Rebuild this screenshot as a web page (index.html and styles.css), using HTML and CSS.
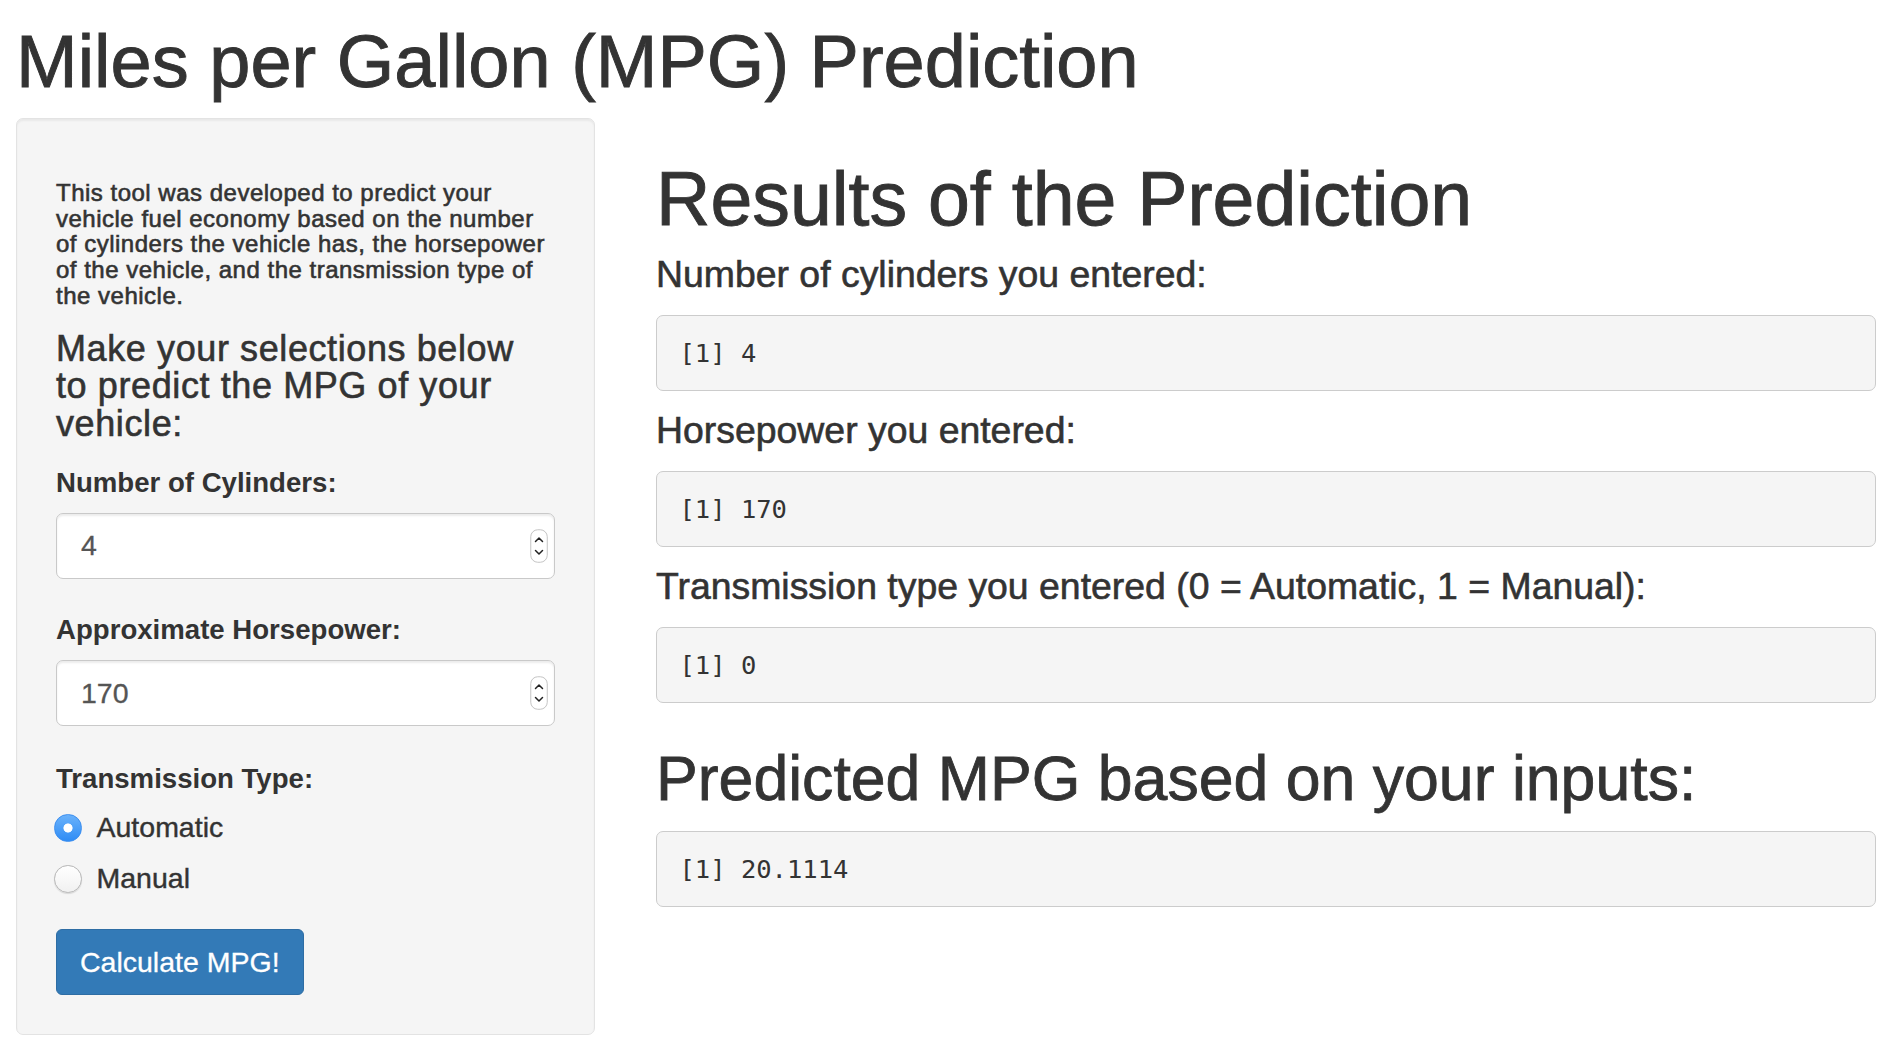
FILE: index.html
```html
<!DOCTYPE html>
<html lang="en">
<head>
<meta charset="utf-8">
<title>Miles per Gallon (MPG) Prediction</title>
<link rel="stylesheet" href="styles.css">
</head>
<body>
<div class="page">
  <h1 class="app-title">Miles per Gallon (MPG) Prediction</h1>
  <div class="layout">
    <aside class="well">
      <h6 class="intro">This tool was developed to predict your<br>vehicle fuel economy based on the number<br>of cylinders the vehicle has, the horsepower<br>of the vehicle, and the transmission type of<br>the vehicle.</h6>
      <h4 class="prompt">Make your selections below<br>to predict the MPG of your<br>vehicle:</h4>

      <div class="form-group">
        <label class="control-label" for="cyl">Number of Cylinders:</label>
        <div class="num-input">
          <input id="cyl" type="number" value="4">
          <svg class="spinner" viewBox="0 0 18 34" aria-hidden="true">
            <rect x="0.75" y="0.75" width="16.5" height="32.5" rx="7" ry="7" fill="#fff" stroke="#c4c4c4" stroke-width="1"/>
            <polyline points="5.5,12.5 9,9 12.5,12.5" fill="none" stroke="#222" stroke-width="1.5" stroke-linecap="round" stroke-linejoin="round"/>
            <polyline points="5.5,21.5 9,25 12.5,21.5" fill="none" stroke="#222" stroke-width="1.5" stroke-linecap="round" stroke-linejoin="round"/>
          </svg>
        </div>
      </div>

      <div class="form-group">
        <label class="control-label" for="hp">Approximate Horsepower:</label>
        <div class="num-input">
          <input id="hp" type="number" value="170">
          <svg class="spinner" viewBox="0 0 18 34" aria-hidden="true">
            <rect x="0.75" y="0.75" width="16.5" height="32.5" rx="7" ry="7" fill="#fff" stroke="#c4c4c4" stroke-width="1"/>
            <polyline points="5.5,12.5 9,9 12.5,12.5" fill="none" stroke="#222" stroke-width="1.5" stroke-linecap="round" stroke-linejoin="round"/>
            <polyline points="5.5,21.5 9,25 12.5,21.5" fill="none" stroke="#222" stroke-width="1.5" stroke-linecap="round" stroke-linejoin="round"/>
          </svg>
        </div>
      </div>

      <div class="form-group radio-group">
        <label class="control-label">Transmission Type:</label>
        <label class="radio"><input type="radio" name="am" value="0" checked><span>Automatic</span></label>
        <label class="radio"><input type="radio" name="am" value="1"><span>Manual</span></label>
      </div>

      <button class="btn-primary" type="button">Calculate MPG!</button>
    </aside>

    <main class="results">
      <h1 class="results-title">Results of the Prediction</h1>
      <h4 class="out-label">Number of cylinders you entered:</h4>
      <pre class="out-box">[1] 4</pre>
      <h4 class="out-label">Horsepower you entered:</h4>
      <pre class="out-box">[1] 170</pre>
      <h4 class="out-label">Transmission type you entered (0 = Automatic, 1 = Manual):</h4>
      <pre class="out-box">[1] 0</pre>
      <h2 class="predicted-title">Predicted MPG based on your inputs:</h2>
      <pre class="out-box">[1] 20.1114</pre>
    </main>
  </div>
</div>
</body>
</html>
```

FILE: styles.css
```css
* {
  box-sizing: border-box;
}

html, body {
  margin: 0;
  padding: 0;
  background: #fff;
}

body {
  font-family: "Liberation Sans", Arial, Helvetica, sans-serif;
  color: #333;
}

.page {
  padding: 21px 24px 0 16px;
}

.app-title {
  margin: 0 0 16px;
  font-size: 74px;
  line-height: 81px;
  font-weight: normal;
  color: #333;
  -webkit-text-stroke: 0.9px #333;
}

.layout {
  display: flex;
  align-items: flex-start;
  gap: 61px;
}

/* ---------- sidebar ---------- */
.well {
  flex: 0 0 579px;
  width: 579px;
  padding: 39px 39px 39px;
  background: #f5f5f5;
  border: 1px solid #e3e3e3;
  border-radius: 7px;
  box-shadow: inset 0 2px 2px rgba(0, 0, 0, 0.05);
}

.intro {
  margin: 21.8px 0 0;
  font-size: 24px;
  letter-spacing: 0.5px;
  line-height: 25.75px;
  font-weight: normal;
  color: #333;
  white-space: nowrap;
  -webkit-text-stroke: 0.6px #333;
}

.prompt {
  margin: 21.2px 0 0;
  font-size: 36px;
  letter-spacing: 0.6px;
  line-height: 37.7px;
  font-weight: normal;
  color: #333;
  white-space: nowrap;
  -webkit-text-stroke: 0.6px #333;
}

.control-label {
  display: block;
  padding-top: 3px;
  font-size: 27.6px;
  line-height: 30px;
  font-weight: bold;
  color: #333;
}

.form-group:nth-of-type(1) {
  margin-top: 22.5px;
}

.form-group:nth-of-type(2) {
  margin-top: 33.5px;
}

.radio-group {
  margin-top: 35px;
}

.num-input {
  position: relative;
  margin-top: 14.6px;
  height: 66px;
}

.num-input input {
  display: block;
  width: 100%;
  height: 66px;
  margin: 0;
  padding: 0 24px;
  font-family: "Liberation Sans", Arial, sans-serif;
  font-size: 28.5px;
  color: #555;
  background: #fff;
  border: 1.5px solid #c9c9c9;
  border-radius: 7px;
  box-shadow: inset 0 2px 2px rgba(0, 0, 0, 0.075);
  outline: none;
  -moz-appearance: textfield;
  appearance: textfield;
  -webkit-text-stroke: 0.3px #555;
}

.num-input input::-webkit-inner-spin-button,
.num-input input::-webkit-outer-spin-button {
  -webkit-appearance: none;
  margin: 0;
}

.spinner {
  position: absolute;
  right: 7px;
  top: 16px;
  width: 18px;
  height: 34px;
}

.radio {
  display: flex;
  align-items: center;
  gap: 15px;
  height: 40px;
  margin-left: -2px;
  font-size: 28.5px;
  color: #333;
  -webkit-text-stroke: 0.4px #333;
}

.radio-group .control-label + .radio {
  margin-top: 13.9px;
}

.radio + .radio {
  margin-top: 11px;
}

.radio input {
  -webkit-appearance: none;
  appearance: none;
  flex: 0 0 27.5px;
  width: 27.5px;
  height: 27.5px;
  margin: 0;
  border-radius: 50%;
  border: 1px solid #b5b5b5;
  background: linear-gradient(#ffffff, #f1f1f1);
  box-shadow: 0 1px 1px rgba(0, 0, 0, 0.12);
}

.radio input:checked {
  border: 1px solid #3a8ef0;
  background:
    radial-gradient(circle, #fff 0 4.2px, rgba(255, 255, 255, 0) 4.9px),
    linear-gradient(#6ab2fb, #2f8cf5);
  box-shadow: none;
}

.btn-primary {
  display: inline-block;
  margin-top: 29.8px;
  height: 66.7px;
  padding: 0 23px;
  font-family: "Liberation Sans", Arial, sans-serif;
  font-size: 28.5px;
  line-height: 64.7px;
  color: #fff;
  background: #337ab7;
  border: 1px solid #2e6da4;
  border-radius: 6px;
  cursor: pointer;
  -webkit-text-stroke: 0.3px #fff;
}

/* ---------- results ---------- */
.results {
  flex: 1 1 auto;
  min-width: 0;
  display: block;
}

.results-title {
  margin: 41px 0 14.2px;
  font-size: 75.3px;
  line-height: 81px;
  font-weight: normal;
  color: #333;
  -webkit-text-stroke: 0.9px #333;
}

.out-label {
  margin: 0 0 20.5px;
  font-size: 37.4px;
  line-height: 40px;
  font-weight: normal;
  color: #333;
  white-space: nowrap;
  -webkit-text-stroke: 0.6px #333;
}

.out-box {
  margin: 0 0 19.5px;
  height: 76px;
  padding: 19px 22.5px;
  font-family: "DejaVu Sans Mono", "Liberation Mono", monospace;
  font-size: 25.5px;
  line-height: 36px;
  color: #333;
  background: #f5f5f5;
  border: 1px solid #cccccc;
  border-radius: 7px;
  overflow: hidden;
}

.predicted-title {
  margin: 41.8px 0 18.5px;
  font-size: 62.6px;
  line-height: 68px;
  font-weight: normal;
  color: #333;
  -webkit-text-stroke: 0.8px #333;
}
```
